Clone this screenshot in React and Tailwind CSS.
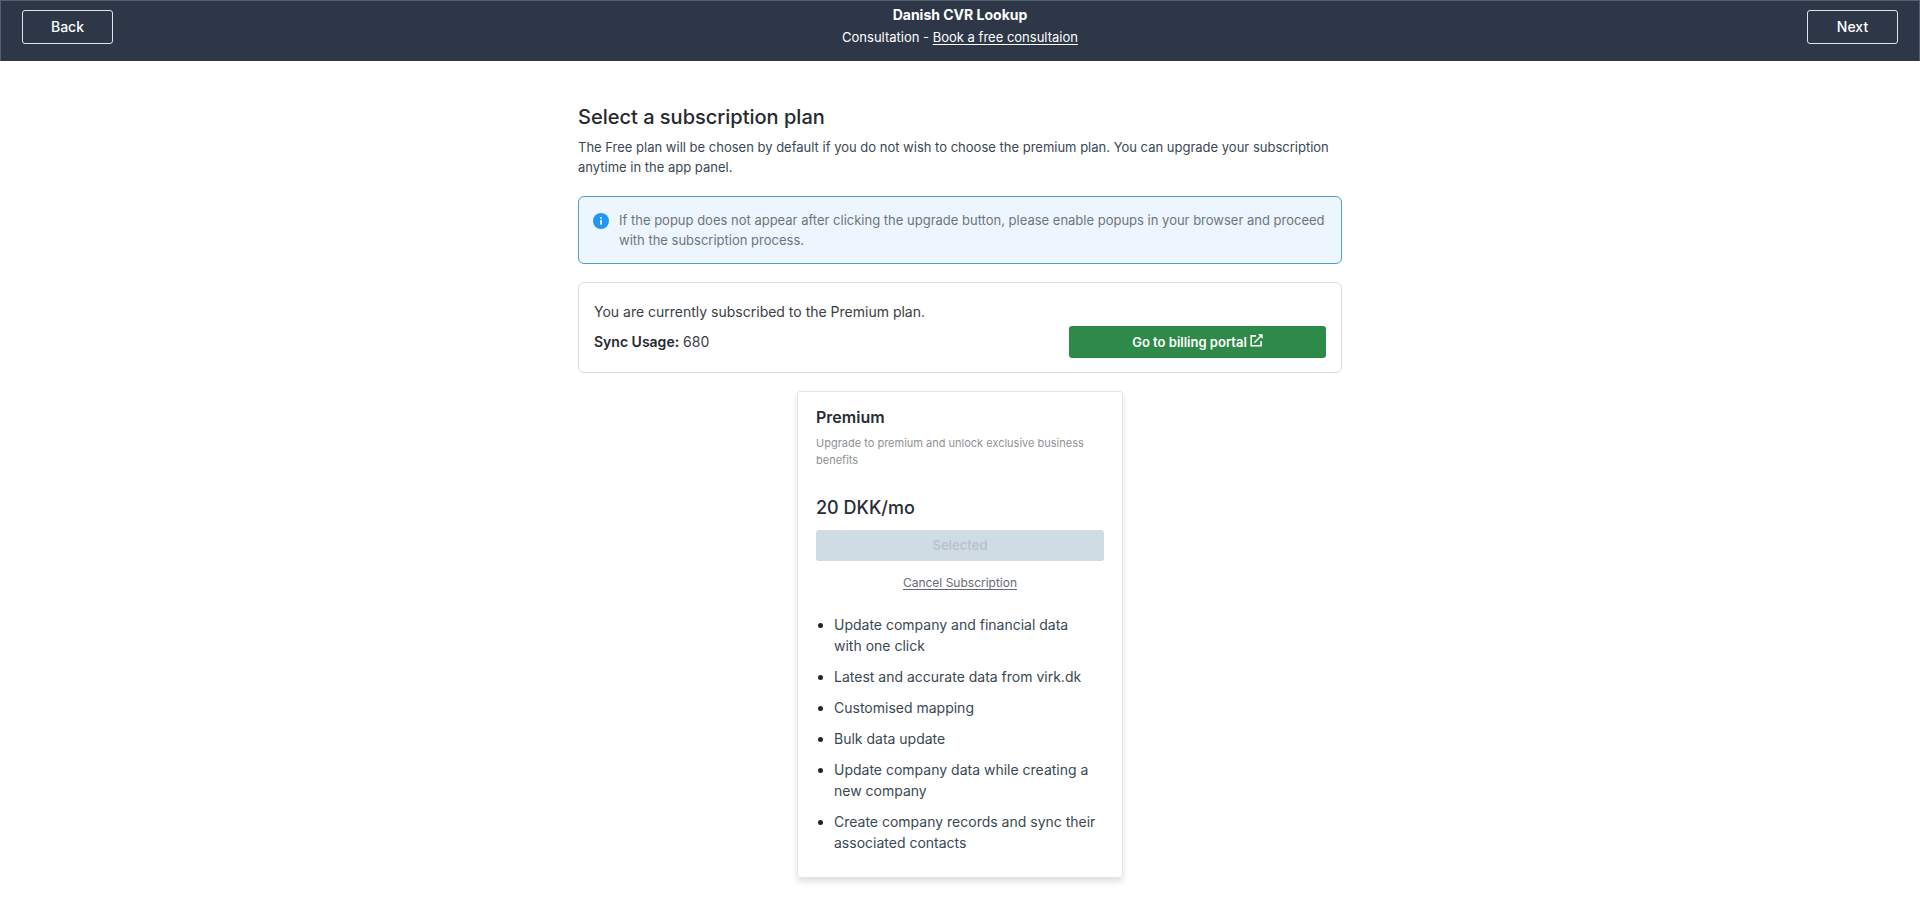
import React from "react";

const features = [
  "Update company and financial data with one click",
  "Latest and accurate data from virk.dk",
  "Customised mapping",
  "Bulk data update",
  "Update company data while creating a new company",
  "Create company records and sync their associated contacts",
];

function NavButton({ children }) {
  return (
    <button
      type="button"
      className="h-[34px] w-[91px] rounded-[3px] border border-[#dfe5ec] pb-px text-sm leading-5 font-medium text-white"
    >
      {children}
    </button>
  );
}

function InfoIcon() {
  return (
    <svg viewBox="0 0 16 16" className="mt-[3px] size-4 shrink-0" aria-hidden="true">
      <circle cx="8" cy="8" r="8" fill="#2196f3" />
      <circle cx="8" cy="4.9" r="0.95" fill="#fff" />
      <rect x="7.2" y="6.8" width="1.6" height="5" rx="0.5" fill="#fff" />
    </svg>
  );
}

function ExternalIcon() {
  return (
    <svg
      viewBox="0 0 13 13"
      className="mb-[3px] size-[13px] shrink-0"
      fill="none"
      stroke="currentColor"
      strokeWidth="1.6"
      aria-hidden="true"
    >
      <path d="M6 1.9H1.2v9.9h9.9V7" />
      <path d="M4.3 8.7 11.2 1.8" />
      <path d="M8 .3h4.7V5z" fill="currentColor" stroke="none" />
    </svg>
  );
}

function Header() {
  return (
    <header className="flex items-start justify-between border border-b-0 border-[#56616f] bg-[#2d3748] px-[21px] pt-[9px] pb-[14px] text-white">
      <NavButton>Back</NavButton>
      <div className="-mt-[5px] text-center">
        <h1 className="text-sm leading-5 font-bold">Danish CVR Lookup</h1>
        <p className="mt-0.5 text-[13px] leading-5">
          Consultation -{" "}
          <a href="#consultation" className="underline underline-offset-2">
            Book a free consultaion
          </a>
        </p>
      </div>
      <NavButton>Next</NavButton>
    </header>
  );
}

function PlanCard() {
  return (
    <section className="w-[326px] rounded-[3px] border border-[#e2e4e6] px-[18px] pt-[13px] pb-6 shadow-[0_4px_6px_rgba(0,0,0,0.12)]">
      <h3 className="text-base leading-6 font-semibold text-[#272c38]">Premium</h3>
      <p className="mt-[6px] text-[11px] leading-[17px] text-[#8e9297]">
        Upgrade to premium and unlock exclusive business benefits
      </p>
      <p className="mt-[25px] text-lg leading-7 font-medium text-[#272c38]">20 DKK/mo</p>
      <button
        type="button"
        disabled
        className="mt-2 block h-[31px] w-full rounded-[3px] bg-[#d0dce4] pb-0.5 text-[13px] leading-5 font-semibold text-[#b9c3cc]"
      >
        Selected
      </button>
      <div className="mt-3 text-center text-xs leading-5">
        <a href="#cancel" className="text-[#666b73] underline underline-offset-2">
          Cancel Subscription
        </a>
      </div>
      <ul className="mt-[21px] flex list-disc flex-col gap-[10px] pr-2 pl-[18px] text-sm leading-[21px] text-[#3a4852] marker:text-[#212529]">
        {features.map((feature) => (
          <li key={feature}>{feature}</li>
        ))}
      </ul>
    </section>
  );
}

export default function App() {
  return (
    <div className="bg-white font-[Inter,sans-serif]">
      <Header />
      <main className="mx-auto flex max-w-[764px] flex-col pt-[42px] pb-6">
        <h2 className="text-xl leading-7 font-medium text-[#26292d]">Select a subscription plan</h2>
        <p className="mt-[6px] text-[13px] leading-5 text-[#3a4852]">
          The Free plan will be chosen by default if you do not wish to choose the premium plan. You
          can upgrade your subscription anytime in the app panel.
        </p>
        <div className="mt-[19px] flex gap-[10px] rounded-[6px] border border-[#4a9fcb] bg-[#edf6ff] px-[14px] py-[13px]">
          <InfoIcon />
          <p className="text-[13px] leading-5 text-[#6c757d]">
            If the popup does not appear after clicking the upgrade button, please enable popups in
            your browser and proceed with the subscription process.
          </p>
        </div>
        <section className="mt-[18px] rounded-[6px] border border-[#d9dbdd] px-[15px] pt-[18px] pb-[14px] text-sm text-[#3c4043]">
          <p className="leading-[22px]">You are currently subscribed to the Premium plan.</p>
          <div className="mt-[3px] flex items-center justify-between">
            <p className="leading-5">
              <strong className="font-semibold text-[#26292d]">Sync Usage:</strong> 680
            </p>
            <button
              type="button"
              className="flex h-8 w-[257px] items-center justify-center gap-[3px] rounded-[3px] bg-[#2d8a48] text-[13px] leading-5 font-semibold text-white"
            >
              Go to billing portal
              <ExternalIcon />
            </button>
          </div>
        </section>
        <div className="mt-[18px] flex justify-center">
          <PlanCard />
        </div>
      </main>
    </div>
  );
}
